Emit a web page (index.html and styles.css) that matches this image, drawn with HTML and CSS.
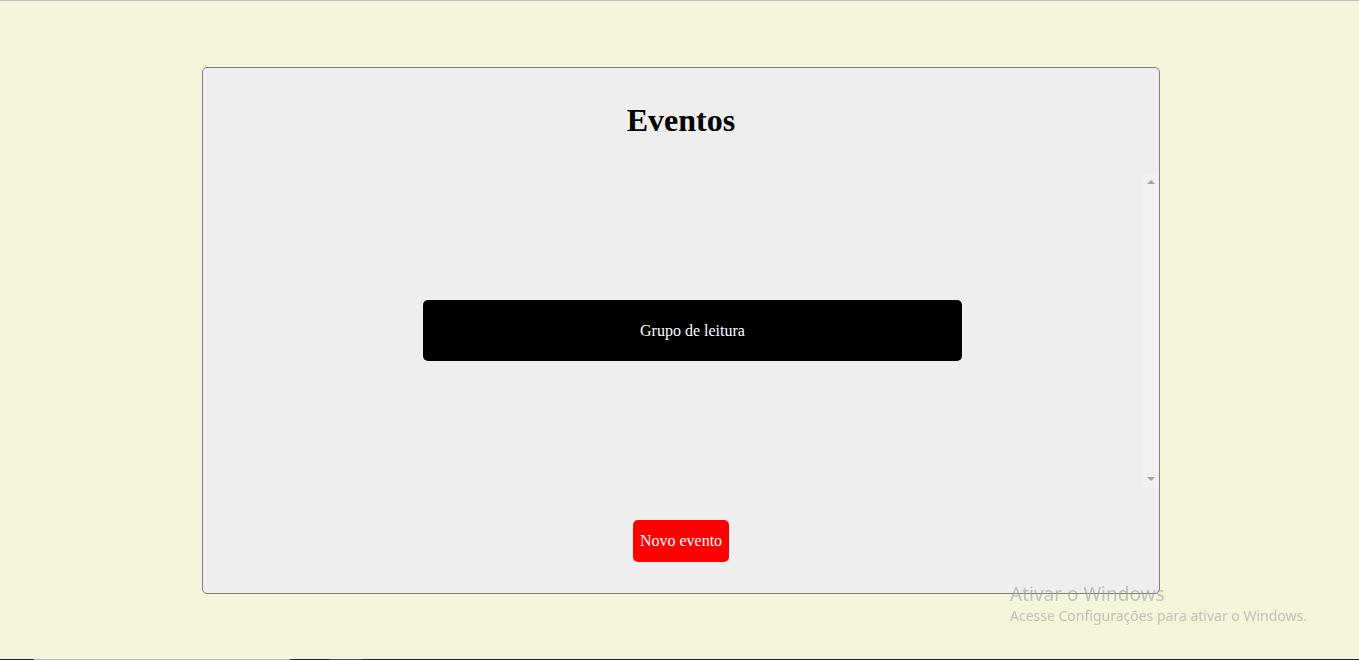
FILE: index.html
```html
<!DOCTYPE html>
<html lang="pt-BR">
<head>
<meta charset="utf-8">
<title>Eventos</title>
<link rel="stylesheet" href="styles.css">
</head>
<body>
<main class="page">
  <section class="card">
    <h1 class="title">Eventos</h1>
    <div class="list-wrap">
      <ul class="list">
        <li class="event">Grupo de leitura</li>
      </ul>
      <div class="scrollbar">
        <span class="arrow arrow-up"></span>
        <span class="arrow arrow-down"></span>
      </div>
    </div>
    <button class="new-btn" type="button">Novo evento</button>
  </section>
</main>
<div class="watermark">
  <div class="wm-title">Ativar o Windows</div>
  <div class="wm-sub">Acesse Configurações para ativar o Windows.</div>
</div>
<div class="taskbar-edge"></div>
</body>
</html>
```

FILE: styles.css
```css
html, body {
  margin: 0;
  padding: 0;
}

body {
  background: #f5f5dc;
  border-top: 1px solid #c4c4c4;
  height: 659px;
  overflow: hidden;
  font-family: "Liberation Serif", "Times New Roman", serif;
}

.page {
  padding: 66px 0 0 202px;
}

.card {
  box-sizing: border-box;
  width: 958px;
  height: 527px;
  border: 1px solid #808080;
  border-radius: 5px;
  background: #eeeeee;
  display: flex;
  flex-direction: column;
  align-items: center;
}

.title {
  margin: 34px 0 0;
  font-size: 32px;
  line-height: 37px;
  font-weight: bold;
  color: #000;
}

.list-wrap {
  margin-top: 34px;
  align-self: stretch;
  height: 315px;
  display: flex;
}

.list {
  flex: 1;
  margin: 0;
  padding: 0 0 0 40px;
  list-style: none;
  display: flex;
  flex-direction: column;
  justify-content: center;
  align-items: center;
}

.event {
  width: 60%;
  height: 61px;
  background: #000;
  color: #fff;
  border-radius: 5px;
  display: flex;
  align-items: center;
  justify-content: center;
  font-size: 16px;
}

.scrollbar {
  width: 17px;
  background: #f1f1f1;
  display: flex;
  flex-direction: column;
  justify-content: space-between;
  align-items: center;
  padding: 7px 0;
  box-sizing: border-box;
}

.arrow {
  width: 0;
  height: 0;
  border-left: 4px solid transparent;
  border-right: 4px solid transparent;
}

.arrow-up {
  border-bottom: 4px solid #a3a3a3;
}

.arrow-down {
  border-top: 4px solid #a3a3a3;
}

.new-btn {
  margin-top: 32px;
  height: 42px;
  padding: 0 7px;
  border: none;
  border-radius: 5px;
  background: #ff0000;
  color: #fff;
  font-family: "Liberation Serif", "Times New Roman", serif;
  font-size: 16px;
}

.watermark {
  position: fixed;
  left: 1010px;
  top: 582px;
  font-family: "Noto Sans", "Open Sans", sans-serif;
  color: rgba(150, 150, 150, 0.55);
}

.wm-title {
  font-size: 19px;
  line-height: 24px;
}

.wm-sub {
  font-size: 14px;
  line-height: 20px;
}

.taskbar-edge {
  position: fixed;
  left: 0;
  right: 0;
  bottom: 0;
  height: 1px;
  background: linear-gradient(to right,
    #1f2a2a 0, #1f2a2a 34px,
    #bdbdbd 34px, #bdbdbd 290px,
    #1f2a2a 290px, #1f2a2a 329px,
    #4a4f4f 329px, #4a4f4f 363px,
    #1f2a2a 363px, #1f2a2a 100%);
}
```
